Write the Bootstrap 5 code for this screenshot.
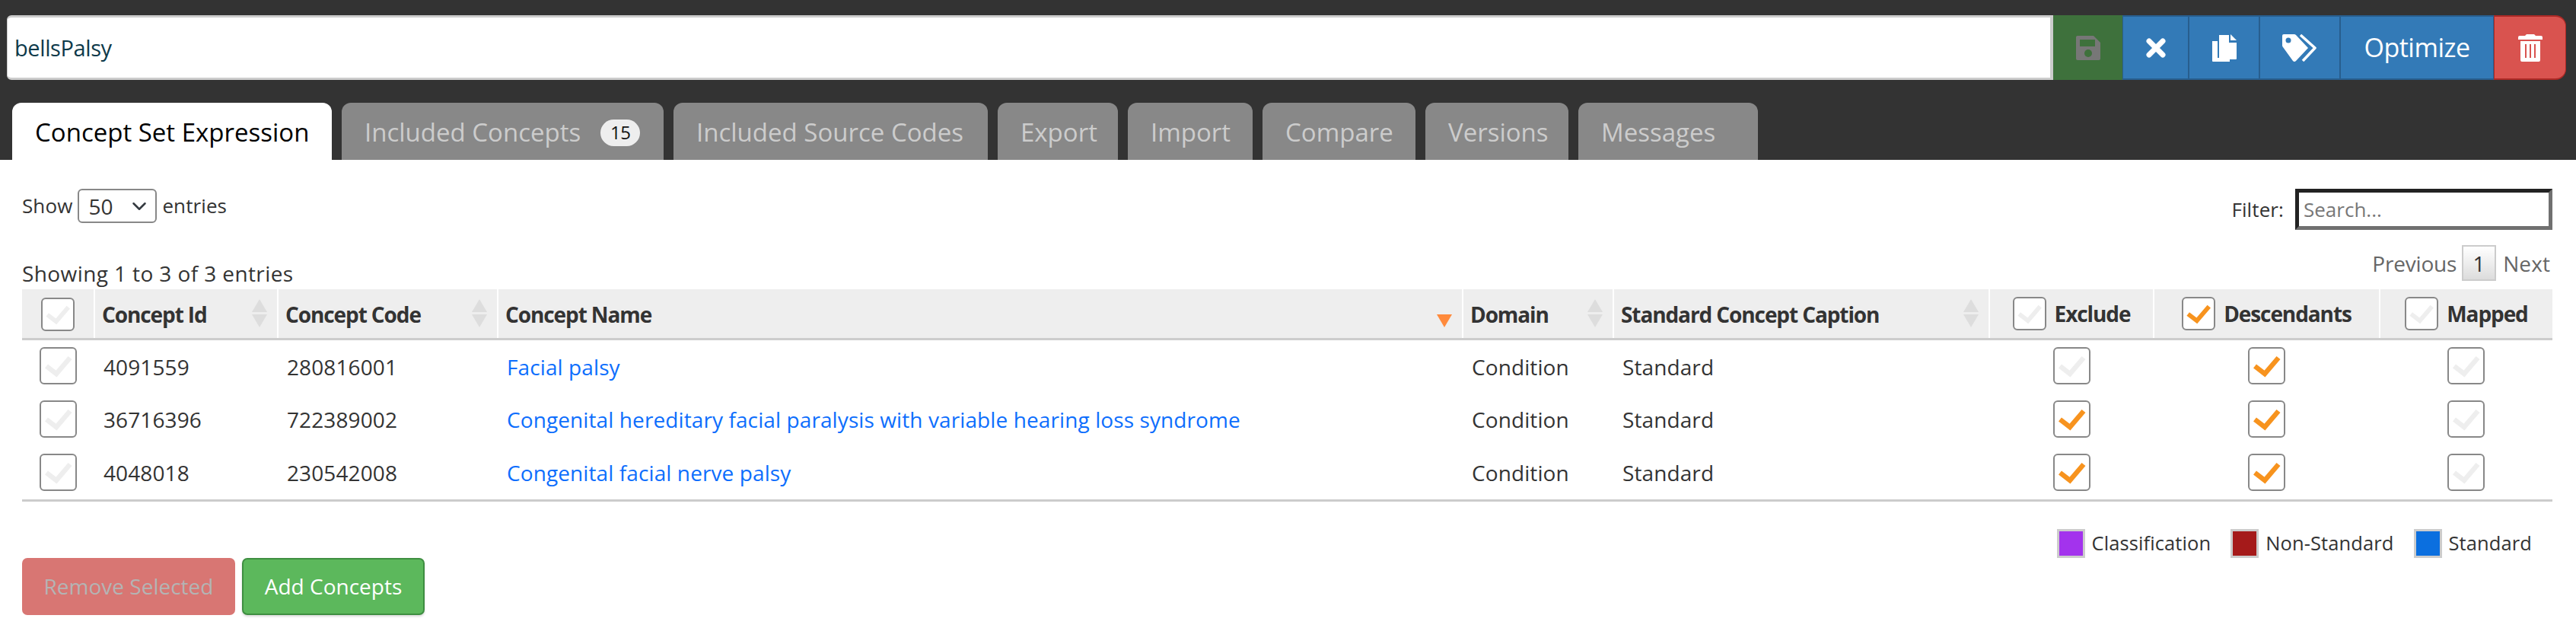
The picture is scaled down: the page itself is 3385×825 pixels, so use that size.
<!DOCTYPE html>
<html lang="en">
<head>
<meta charset="utf-8">
<title>Concept Set</title>
<link href="https://cdn.jsdelivr.net/npm/bootstrap@5.3.0/dist/css/bootstrap.min.css" rel="stylesheet">
<style>
html,body{background:#fff;margin:0}
body{font-family:"Open Sans",sans-serif;font-size:28px;color:#333;width:3385px;height:825px;overflow:hidden;letter-spacing:.1px}
.topband{background:#333;height:210px;padding:20px 13px 0 9px}
.namebar{height:85px}
.nameinput{flex:1 1 auto;height:85px;border:none;border-top:3px solid #ccc;border-bottom:3px solid #ccc;border-left:1px solid #ccc;border-right:4px solid #ccc;border-radius:6px 0 0 6px;font-size:29px;padding:0 9px;color:#0e3a4a;background:#fff;font-family:inherit;letter-spacing:-.4px}
.tbtn{height:85px;display:flex;align-items:center;justify-content:center;border-radius:0;border:2px solid #285e8e;border-width:2px 1px;background:#337ab7;color:#fff;font-size:34px;padding:0;letter-spacing:-.5px}
.tsave{width:91px;background:#3e713c;border-color:#3e713c;border-width:2px 0}
.tx{width:87px}.tcopy{width:93px}.ttag{width:106px}.topt{width:202px}
.tdel{width:95px;background:#d9534f;border-color:#ac2925;border-radius:0 14px 14px 0}
.tabstrip{margin-top:30px;padding-left:7px;gap:13px;height:75px}
.tabitem{height:75px;border-radius:12px 12px 0 0;background:#888;color:#ccc;font-size:33px;display:flex;align-items:center;justify-content:flex-start;padding:3px 0 0 30px;letter-spacing:0}
.tabitem.on{background:#fff;color:#000}
.w1{width:420px}.w2{width:423px}.w3{width:413px}.w4{width:158px}.w5{width:164px}.w6{width:201px}.w7{width:188px}.w8{width:236px}
.cnt{background:#eee;color:#111;border-radius:18px;font-size:24px;width:52px;height:35px;display:inline-flex;align-items:center;justify-content:center;margin-left:26px;letter-spacing:-.5px}
.wrap{padding:0 31px 0 29px}
.dtop{height:112px;padding-top:38px;align-items:flex-start}
.dlen{height:45px;gap:7px;font-size:26px}
.sel{width:104px;height:45px;border:2px solid #888;border-radius:6px;padding:0 12px;color:#333;font-size:28px;background-size:26px 20px;background-position:right 8px center}
.filt{gap:15px;height:54px;font-size:26px}
.finput{width:338px;height:54px;border-width:5px;border-style:solid;border-color:#222 #707070 #707070 #222;border-radius:0;padding:0 6px;font-size:26px;font-family:inherit}
.finput::placeholder{color:#777}
.dinfo{height:58px;align-items:flex-end}
.infotext{letter-spacing:.4px}
.pager{gap:9px;color:#666;position:relative;top:-11px;padding-right:3px}
.pgprev{letter-spacing:-.2px;margin-right:-2px}
.pgnum{width:45px;height:47px;display:flex;align-items:center;justify-content:center;color:#333;background:linear-gradient(#fff,#dcdcdc);border:2px solid #ccc}
.cstable{table-layout:fixed;width:3325px;margin:0;border-collapse:collapse;color:#333;font-size:28px}
.cstable th{background:#eee;height:65px;padding:2px 0 0 9px;border-bottom:3px solid #ccc;border-right:2px solid #fff;vertical-align:middle;font-weight:700;position:relative;letter-spacing:-1.1px;color:#333;box-shadow:none}
.cstable th:last-child{border-right:0}
.cstable td{height:70px;padding:2px 0 0 12px;border:0;vertical-align:middle;box-shadow:none;background:#fff}
.cstable tbody tr:last-child td{border-bottom:3px solid #ccc;height:72px}
.c1{width:95px}.c2{width:241px}.c3{width:289px}.c4{width:1268px}.c5{width:198px}.c6{width:494px}.c7{width:216px}.c8{width:297px}.c9{width:227px}
.cstable a{color:#0d6efd;text-decoration:none}
.ck{display:inline-flex;width:49px;height:49px;border:2px solid #888;border-radius:6px;background:#fff;vertical-align:middle}
.ck svg{width:100%;height:100%;display:block}
.ck.sm{width:44px;height:44px}
.ck path{stroke:#eee;stroke-width:6.500;fill:none}
.ck.yes path{stroke:#f7931e}
.cc{text-align:center;padding:0 !important}
.hc{display:flex;align-items:center;justify-content:center;gap:11px}
.sorter{position:absolute;right:13px;top:50%;margin-top:-19px;display:flex;flex-direction:column;gap:3px}
.tri-u{width:0;height:0;border-left:10px solid transparent;border-right:10px solid transparent;border-bottom:17px solid #ddd}
.tri-d{width:0;height:0;border-left:10px solid transparent;border-right:10px solid transparent;border-top:17px solid #ddd}
.tri-d.act{border-top-color:#ff8a3c}
.sorter.down{margin-top:1px}
.legendrow{height:38px;margin-top:36px;padding-right:27px;align-items:center;font-size:25.500px}
.lg{display:flex;align-items:center;gap:9px;margin-left:26px;color:#333}
.sw{width:37px;height:38px;display:block;border:3px solid #ccc}
.sw1{background:#a333ed}.sw2{background:#a51a1a}.sw3{background:#0b6fdf}
.footrow{gap:9px}
.fbtn{height:75px;font-size:28px;border-radius:7px;display:flex;align-items:center;justify-content:center;padding:0;letter-spacing:0}
.btn.frem:disabled{width:280px;background:#d87673;border:0;color:#b4b4b4;opacity:1}
.btn.fadd{width:240px;background:#5cb85c;border:2px solid #3e8e41;color:#fff;box-shadow:0 2px 3px rgba(0,0,0,.15)}
</style>
</head>
<body>
<div class="topband">
  <div class="namebar d-flex">
    <input class="nameinput" type="text" value="bellsPalsy" aria-label="Concept set name">
    <button class="tbtn tsave" type="button" aria-label="Save"><svg width="32" height="32" viewBox="0 0 32 32"><path fill="#777" d="M2 0h21l9 9v21a2 2 0 0 1-2 2H2a2 2 0 0 1-2-2V2a2 2 0 0 1 2-2z"/><rect x="5" y="5" width="20" height="9" fill="#3e713c"/><circle cx="16" cy="23" r="5" fill="#3e713c"/></svg></button>
    <button class="tbtn tx" type="button" aria-label="Close"><svg width="26" height="26" viewBox="0 0 26 26"><path stroke="#fff" stroke-width="7" stroke-linecap="round" d="M4 4l18 18M22 4L4 22"/></svg></button>
    <button class="tbtn tcopy" type="button" aria-label="Copy"><svg width="32" height="36" viewBox="0 0 32 36"><path fill="#fff" d="M0 9h7v22h16v5H1a1 1 0 0 1-1-1z"/><path fill="#fff" d="M9 1h13v10h10v21a1 1 0 0 1-1 1H10a1 1 0 0 1-1-1z"/><path fill="#fff" d="M24 0l8 8h-8z"/></svg></button>
    <button class="tbtn ttag" type="button" aria-label="Tags"><svg width="46" height="36" viewBox="0 0 46 36"><path fill="#fff" d="M2 0h13a4 4 0 0 1 3 1l16 17-16 17a3 3 0 0 1-4 0L1 17a4 4 0 0 1-1-3V2a2 2 0 0 1 2-2z"/><circle cx="8" cy="8" r="3.500" fill="#337ab7"/><path fill="none" stroke="#fff" stroke-width="3.500" stroke-linejoin="round" d="M24 1l19 17-16 17"/></svg></button>
    <button class="tbtn topt" type="button">Optimize</button>
    <button class="tbtn tdel" type="button" aria-label="Delete"><svg width="32" height="36" viewBox="0 0 32 36"><path fill="#fff" d="M11 0h10l2 2h7a2 2 0 0 1 2 2v3H0V4a2 2 0 0 1 2-2h7z"/><path fill="#fff" fill-rule="evenodd" d="M3 9h26v25a2 2 0 0 1-2 2H5a2 2 0 0 1-2-2zM9 13v18h2V13zM15 13v18h2V13zM21 13v18h2V13z"/></svg></button>
  </div>
  <div class="tabstrip d-flex">
    <div class="tabitem on w1">Concept Set Expression</div>
    <div class="tabitem w2">Included Concepts<span class="cnt">15</span></div>
    <div class="tabitem w3">Included Source Codes</div>
    <div class="tabitem w4">Export</div>
    <div class="tabitem w5">Import</div>
    <div class="tabitem w6">Compare</div>
    <div class="tabitem w7">Versions</div>
    <div class="tabitem w8">Messages</div>
  </div>
</div>
<div class="wrap">
  <div class="dtop d-flex justify-content-between">
    <div class="dlen d-flex align-items-center">Show <select class="form-select sel" aria-label="Entries"><option>50</option></select> entries</div>
    <div class="filt d-flex align-items-center">Filter: <input class="finput" type="text" placeholder="Search..." aria-label="Filter"></div>
  </div>
  <div class="dinfo d-flex justify-content-between">
    <div class="infotext">Showing 1 to 3 of 3 entries</div>
    <div class="pager d-flex align-items-center"><span class="pgprev">Previous</span><span class="pgnum">1</span><span>Next</span></div>
  </div>
  <table class="table cstable">
    <colgroup><col class="c1"><col class="c2"><col class="c3"><col class="c4"><col class="c5"><col class="c6"><col class="c7"><col class="c8"><col class="c9"></colgroup>
    <thead><tr>
      <th class="cc"><span class="ck sm no"><svg viewBox="0 0 45 45"><path d="M7 23l13 10L38 12"/></svg></span></th>
      <th>Concept Id<span class="sorter"><i class="tri-u"></i><i class="tri-d"></i></span></th>
      <th>Concept Code<span class="sorter"><i class="tri-u"></i><i class="tri-d"></i></span></th>
      <th>Concept Name<span class="sorter down"><i class="tri-d act"></i></span></th>
      <th>Domain<span class="sorter"><i class="tri-u"></i><i class="tri-d"></i></span></th>
      <th>Standard Concept Caption<span class="sorter"><i class="tri-u"></i><i class="tri-d"></i></span></th>
      <th class="cc"><div class="hc"><span class="ck sm no"><svg viewBox="0 0 45 45"><path d="M7 23l13 10L38 12"/></svg></span>Exclude</div></th>
      <th class="cc"><div class="hc"><span class="ck sm yes"><svg viewBox="0 0 45 45"><path d="M7 23l13 10L38 12"/></svg></span>Descendants</div></th>
      <th class="cc"><div class="hc"><span class="ck sm no"><svg viewBox="0 0 45 45"><path d="M7 23l13 10L38 12"/></svg></span>Mapped</div></th>
    </tr></thead>
    <tbody>
      <tr>
        <td class="cc"><span class="ck no"><svg viewBox="0 0 45 45"><path d="M7 23l13 10L38 12"/></svg></span></td>
        <td>4091559</td><td>280816001</td><td><a href="#">Facial palsy</a></td><td>Condition</td><td>Standard</td>
        <td class="cc"><span class="ck no"><svg viewBox="0 0 45 45"><path d="M7 23l13 10L38 12"/></svg></span></td>
        <td class="cc"><span class="ck yes"><svg viewBox="0 0 45 45"><path d="M7 23l13 10L38 12"/></svg></span></td>
        <td class="cc"><span class="ck no"><svg viewBox="0 0 45 45"><path d="M7 23l13 10L38 12"/></svg></span></td>
      </tr>
      <tr>
        <td class="cc"><span class="ck no"><svg viewBox="0 0 45 45"><path d="M7 23l13 10L38 12"/></svg></span></td>
        <td>36716396</td><td>722389002</td><td><a href="#">Congenital hereditary facial paralysis with variable hearing loss syndrome</a></td><td>Condition</td><td>Standard</td>
        <td class="cc"><span class="ck yes"><svg viewBox="0 0 45 45"><path d="M7 23l13 10L38 12"/></svg></span></td>
        <td class="cc"><span class="ck yes"><svg viewBox="0 0 45 45"><path d="M7 23l13 10L38 12"/></svg></span></td>
        <td class="cc"><span class="ck no"><svg viewBox="0 0 45 45"><path d="M7 23l13 10L38 12"/></svg></span></td>
      </tr>
      <tr>
        <td class="cc"><span class="ck no"><svg viewBox="0 0 45 45"><path d="M7 23l13 10L38 12"/></svg></span></td>
        <td>4048018</td><td>230542008</td><td><a href="#">Congenital facial nerve palsy</a></td><td>Condition</td><td>Standard</td>
        <td class="cc"><span class="ck yes"><svg viewBox="0 0 45 45"><path d="M7 23l13 10L38 12"/></svg></span></td>
        <td class="cc"><span class="ck yes"><svg viewBox="0 0 45 45"><path d="M7 23l13 10L38 12"/></svg></span></td>
        <td class="cc"><span class="ck no"><svg viewBox="0 0 45 45"><path d="M7 23l13 10L38 12"/></svg></span></td>
      </tr>
    </tbody>
  </table>
  <div class="legendrow d-flex justify-content-end">
    <span class="lg"><i class="sw sw1"></i>Classification</span>
    <span class="lg"><i class="sw sw2"></i>Non-Standard</span>
    <span class="lg"><i class="sw sw3"></i>Standard</span>
  </div>
  <div class="footrow d-flex">
    <button class="btn fbtn frem" type="button" disabled>Remove Selected</button>
    <button class="btn fbtn fadd" type="button">Add Concepts</button>
  </div>
</div>
<script src="https://cdn.jsdelivr.net/npm/bootstrap@5.3.0/dist/js/bootstrap.bundle.min.js"></script>
</body>
</html>
